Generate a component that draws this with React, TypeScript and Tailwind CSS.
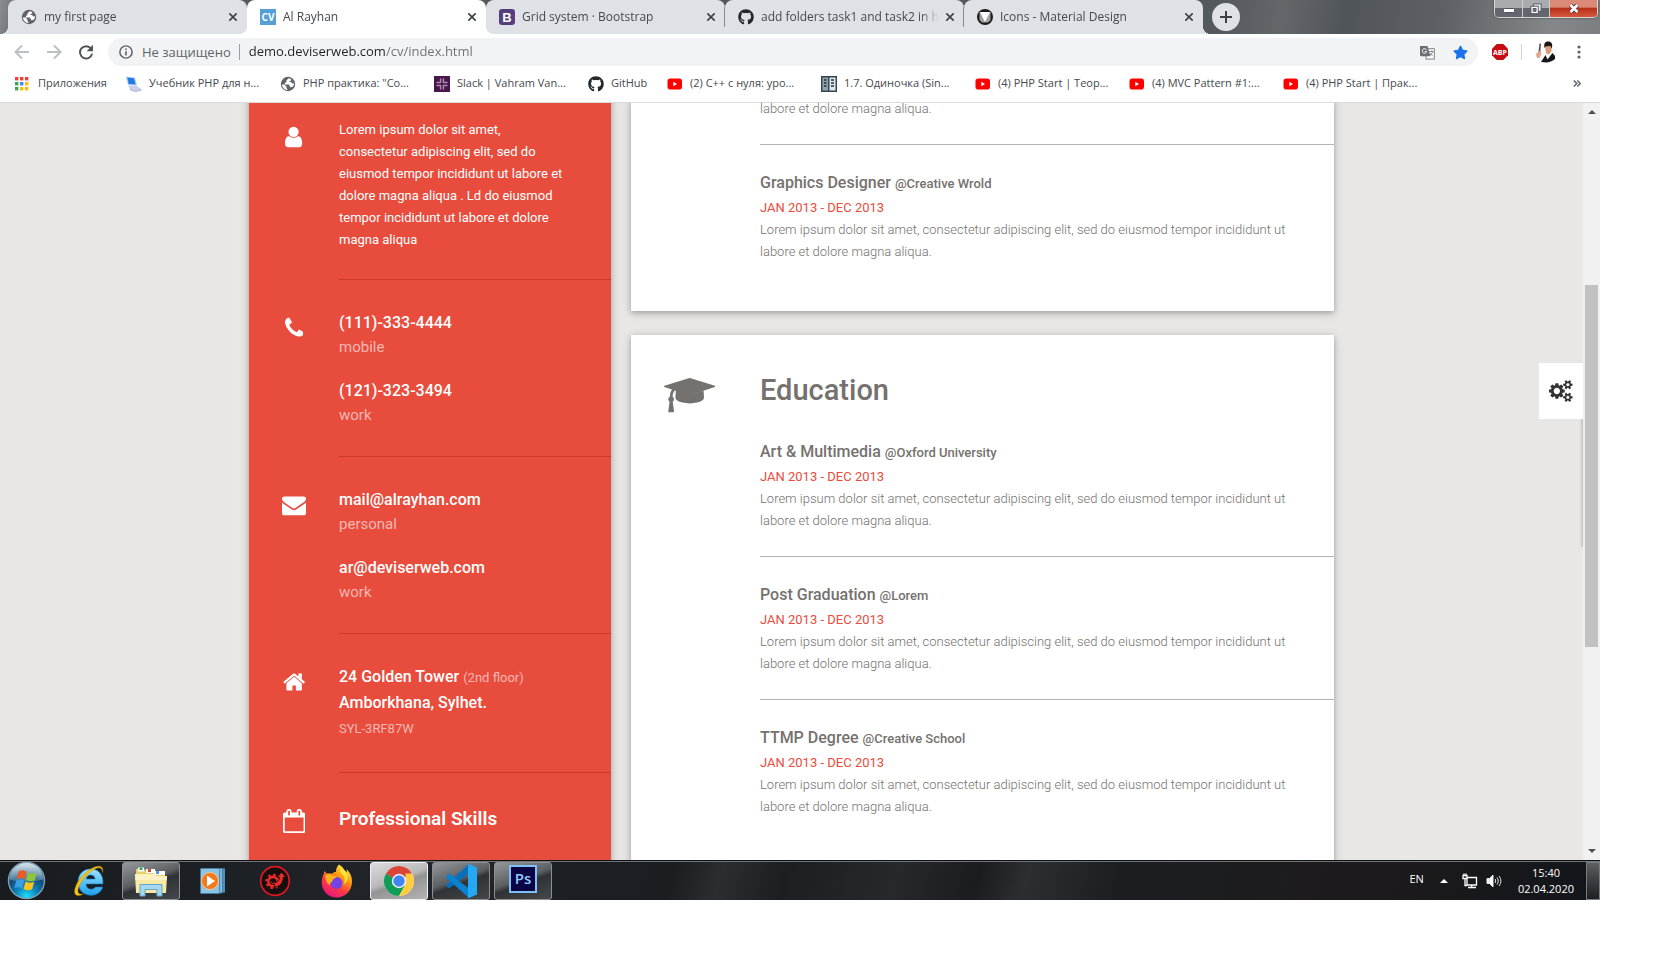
import React from "react";
import { FaGithub, FaStar } from "react-icons/fa";

const LOREM =
  "Lorem ipsum dolor sit amet, consectetur adipiscing elit, sed do eiusmod tempor incididunt ut labore et dolore magna aliqua.";

const PATHS = {
  user: "M1280 137q0 -109 -62.5 -187t-150.5 -78h-854q-88 0 -150.5 78t-62.5 187q0 85 8.5 160.5t31.5 152t58.5 131t94 89t134.5 34.5q131 -128 313 -128t313 128q76 0 134.5 -34.5t94 -89t58.5 -131t31.5 -152t8.5 -160.5zM1024 1024q0 -159 -112.5 -271.5t-271.5 -112.5t-271.5 112.5t-112.5 271.5t112.5 271.5t271.5 112.5t271.5 -112.5t112.5 -271.5z",
  phone:
    "M1408 296q0 -27 -10 -70.5t-21 -68.5q-21 -50 -122 -106q-94 -51 -186 -51q-27 0 -53 3.5t-57.5 12.5t-47 14.5t-55.5 20.5t-49 18q-98 35 -175 83q-127 79 -264 216t-216 264q-48 77 -83 175q-3 9 -18 49t-20.5 55.5t-14.5 47t-12.5 57.5t-3.5 53q0 92 51 186q56 101 106 122q25 11 68.5 21t70.5 10q14 0 21 -3q18 -6 53 -76q11 -19 30 -54t35 -63.5t31 -53.5q3 -4 17.5 -25t21.5 -35.5t7 -28.5q0 -20 -28.5 -50t-62 -55t-62 -53t-28.5 -46q0 -9 5 -22.5t8.5 -20.5t14 -24t11.5 -19q76 -137 174 -235t235 -174q2 -1 19 -11.5t24 -14t20.5 -8.5t22.5 -5q18 0 46 28.5t53 62t55 62t50 28.5q14 0 28.5 -7t35.5 -21.5t25 -17.5q25 -15 53.5 -31t63.5 -35t54 -30q70 -35 76 -53q3 -7 3 -21z",
  mail: "M1792 826v-794q0 -66 -47 -113t-113 -47h-1472q-66 0 -113 47t-47 113v794q44 -49 101 -87q362 -246 497 -345q57 -42 92.5 -65.5t94.5 -48t110 -24.5h1h1q51 0 110 24.5t94.5 48t92.5 65.5q170 123 498 345q57 39 100 87zM1792 1120q0 -79 -49 -151t-122 -123q-376 -261 -468 -325q-10 -7 -42.5 -30.5t-54 -38t-52 -32.5t-57.5 -27t-50 -9h-1h-1q-23 0 -50 9t-57.5 27t-52 32.5t-54 38t-42.5 30.5q-91 64 -262 182.5t-205 142.5q-62 42 -117 115.5t-55 136.5q0 78 41.5 130t118.5 52h1472q65 0 112.5 -47t47.5 -113z",
  home: "M1408 544v-480q0 -26 -19 -45t-45 -19h-384v384h-256v-384h-384q-26 0 -45 19t-19 45v480q0 1 .5 3t.5 3l575 474l575 -474q1 -2 1 -6zM1631 613l-62 -74q-8 -9 -21 -11h-3q-13 0 -21 7l-692 577l-692 -577q-12 -8 -24 -7q-13 2 -21 11l-62 74q-8 10 -7 23.5t11 21.5l719 599q32 26 76 26t76 -26l244 -204v195q0 14 9 23t23 9h192q14 0 23 -9t9 -23v-408l219 -182q10 -8 11 -21.5t-7 -23.5z",
  calendar:
    "M128 -128h1408v1024h-1408v-1024zM512 1088v288q0 14 -9 23t-23 9h-64q-14 0 -23 -9t-9 -23v-288q0 -14 9 -23t23 -9h64q14 0 23 9t9 23zM1280 1088v288q0 14 -9 23t-23 9h-64q-14 0 -23 -9t-9 -23v-288q0 -14 9 -23t23 -9h64q14 0 23 9t9 23zM1664 1152v-1280q0 -52 -38 -90t-90 -38h-1408q-52 0 -90 38t-38 90v1280q0 52 38 90t90 38h128v96q0 66 47 113t113 47h64q66 0 113 -47t47 -113v-96h384v96q0 66 47 113t113 47h64q66 0 113 -47t47 -113v-96h128q52 0 90 -38t38 -90z",
  cap: "M1774 836l18 -316q4 -69 -82 -128t-235 -93.5t-323 -34.5t-323 34.5t-235 93.5t-82 128l18 316l574 -181q22 -7 48 -7t48 7zM2304 1024q0 -23 -22 -31l-1120 -352q-4 -1 -10 -1t-10 1l-652 206q-43 -34 -71 -111.5t-34 -178.5q63 -36 63 -109q0 -69 -58 -107l58 -433q2 -14 -8 -25q-9 -11 -24 -11h-192q-15 0 -24 11q-10 11 -8 25l58 433q-58 38 -58 107q0 73 65 111q11 207 98 330l-333 104q-22 8 -22 31t22 31l1120 352q4 1 10 1t10 -1l1120 -352q22 -8 22 -31z",
  cogs: "M896 640q0 106 -75 181t-181 75t-181 -75t-75 -181t75 -181t181 -75t181 75t75 181zM1664 128q0 52 -38 90t-90 38t-90 -38t-38 -90q0 -53 37.5 -90.5t90.5 -37.5t90.5 37.5t37.5 90.5zM1664 1152q0 52 -38 90t-90 38t-90 -38t-38 -90q0 -53 37.5 -90.5t90.5 -37.5t90.5 37.5t37.5 90.5zM1280 731v-185q0 -10 -7 -19.5t-16 -10.5l-155 -24q-11 -35 -32 -76q34 -48 90 -115q7 -11 7 -20q0 -12 -7 -19q-23 -30 -82.5 -89.5t-78.5 -59.5q-11 0 -21 7l-115 90q-37 -19 -77 -31q-11 -108 -23 -155q-7 -24 -30 -24h-186q-11 0 -20 7.5t-10 17.5l-23 153q-34 10 -75 31l-118 -89q-7 -7 -20 -7q-11 0 -21 8q-144 133 -144 160q0 9 7 19q10 14 41 53t47 61q-23 44 -35 82l-152 24q-10 1 -17 9.5t-7 19.5v185q0 10 7 19.5t16 10.5l155 24q11 35 32 76q-34 48 -90 115q-7 11 -7 20q0 12 7 20q22 30 82 89t79 59q11 0 21 -7l115 -90q34 18 77 32q11 108 23 154q7 24 30 24h186q11 0 20 -7.5t10 -17.5l23 -153q34 -10 75 -31l118 89q8 7 20 7q11 0 21 -8q144 -133 144 -160q0 -8 -7 -19q-12 -16 -42 -54t-45 -60q23 -48 34 -82l152 -23q10 -2 17 -10.5t7 -19.5zM1920 198v-140q0 -16 -149 -31q-12 -27 -30 -52q51 -113 51 -138q0 -4 -4 -7q-122 -71 -124 -71q-8 0 -46 47t-52 68q-20 -2 -30 -2t-30 2q-14 -21 -52 -68t-46 -47q-2 0 -124 71q-4 3 -4 7q0 25 51 138q-18 25 -30 52q-149 15 -149 31v140q0 16 149 31q13 29 30 52q-51 113 -51 138q0 4 4 7q4 2 35 20t59 34t30 16q8 0 46 -46.5t52 -67.5q20 2 30 2t30 -2q51 71 92 112l6 2q4 0 124 -70q4 -3 4 -7q0 -25 -51 -138q17 -23 30 -52q149 -15 149 -31zM1920 1222v-140q0 -16 -149 -31q-12 -27 -30 -52q51 -113 51 -138q0 -4 -4 -7q-122 -71 -124 -71q-8 0 -46 47t-52 68q-20 -2 -30 -2t-30 2q-14 -21 -52 -68t-46 -47q-2 0 -124 71q-4 3 -4 7q0 25 51 138q-18 25 -30 52q-149 15 -149 31v140q0 16 149 31q13 29 30 52q-51 113 -51 138q0 4 4 7q4 2 35 20t59 34t30 16q8 0 46 -46.5t52 -67.5q20 2 30 2t30 -2q51 71 92 112l6 2q4 0 124 -70q4 -3 4 -7q0 -25 -51 -138q17 -23 30 -52q149 -15 149 -31z",
};

const ADVANCE = { user: 1280, phone: 1408, mail: 1792, home: 1664, calendar: 1664, cap: 2304, cogs: 1920 };

type GlyphName = keyof typeof PATHS;

function Glyph({ name, className }: { name: GlyphName; className: string }) {
  return (
    <svg viewBox={`0 -1536 ${ADVANCE[name]} 1792`} className={className} fill="currentColor" aria-hidden="true">
      <path transform="scale(1 -1)" d={PATHS[name]} />
    </svg>
  );
}

/* ---------- favicons ---------- */

function GlobeIcon() {
  return (
    <svg viewBox="0 0 16 16" className="size-4 shrink-0">
      <circle cx="8" cy="8" r="7.2" fill="#5f6368" />
      <path d="M8.6 2.2 6.4 4.6v1.5l-1.6.9v1.4h3.8l1.3 1.5v1.3l2.4-.2c1.2-1 1.9-2.4 1.7-3.8l-1.5.3-1.5-1.4H9.6V4.8h1.6V3.2C10.4 2.6 9.6 2.3 8.6 2.2z" fill="#fff" />
      <path d="M1.9 8.6h2.6l1.9 1.9v1.6l1 .9v1.1C4.5 13.9 2.2 11.6 1.9 8.6z" fill="#fff" />
    </svg>
  );
}

function CvIcon() {
  return (
    <span className="flex size-4 shrink-0 items-center justify-center bg-[#55a0d8] text-[10px] leading-none font-bold text-white">CV</span>
  );
}

function BootstrapIcon() {
  return (
    <span className="flex size-4 shrink-0 items-center justify-center rounded-[3px] bg-[#563d7c] font-['Liberation_Sans',sans-serif] text-[13px] leading-none font-bold text-white">
      B
    </span>
  );
}

function MaterialIcon() {
  return (
    <svg viewBox="0 0 16 16" className="size-4 shrink-0">
      <circle cx="8" cy="8" r="8" fill="#1b1b1b" />
      <path d="M2.500 3h11v8L11 13.500H5L2.500 11z" fill="#a3a3a3" />
      <path d="M3 3h10L8 13z" fill="#fff" />
    </svg>
  );
}

function YoutubeIcon() {
  return (
    <svg viewBox="0 0 16 16" className="size-4 shrink-0">
      <rect x="0.5" y="2.5" width="14.5" height="11" rx="2.8" fill="#f00" />
      <path d="M6.3 5.8v4.4L10 8z" fill="#fff" />
    </svg>
  );
}

function AppsIcon() {
  const colors = ["#ea4335", "#ea4335", "#ea4335", "#34a853", "#4285f4", "#fbbc05", "#34a853", "#fbbc05", "#fbbc05"];
  return (
    <svg viewBox="0 0 16 16" className="size-4 shrink-0">
      {colors.map((c, i) => (
        <rect key={i} x={(i % 3) * 5} y={1 + Math.floor(i / 3) * 5} width="3.4" height="3.4" fill={c} />
      ))}
    </svg>
  );
}

function ComputerIcon() {
  return (
    <svg viewBox="0 0 16 16" className="size-4 shrink-0">
      <path d="M0 .5 9 1.5l2 8L2 9z" fill="#b9cdf2" />
      <path d="M1.2 1.6 8 2.3l1.6 6.2L2.700 8z" fill="#1d7fe4" />
      <path d="M2 9.500 10.500 9.800l5 3.500-6 2.200L4 13z" fill="#c9cfe8" />
      <path d="M4 13l5.500 2.500 6-2.200v.9L9.500 16 4 14z" fill="#8f96c4" />
    </svg>
  );
}

function SlackIcon() {
  return (
    <svg viewBox="0 0 16 16" className="size-4 shrink-0">
      <rect width="16" height="16" fill="#4a154b" />
      <g stroke="#a98cab" strokeWidth="1.5" strokeLinecap="round">
        <path d="M6.6 3v3.600M9.400 3v3.300M6.600 9.600v3.400M9.400 9.400V13M3 6.600h3.400M9.600 6.600H13M3 9.400h3.400M9.600 9.400H13" />
      </g>
    </svg>
  );
}

function PatternIcon() {
  return (
    <svg viewBox="0 0 16 16" className="size-4 shrink-0">
      <rect width="16" height="16" fill="#37474f" />
      <rect x="1.5" y="1.5" width="5.5" height="13" fill="#8fa3ae" />
      <rect x="8.5" y="1.5" width="6" height="13" fill="#dfe6ea" />
      <path d="M3 4h2.500M3 7h2.500M3 10h2.500M10 4h3M10 7h3M10 10h3" stroke="#263238" strokeWidth="1.3" />
    </svg>
  );
}

/* ---------- browser window ---------- */

type TabInfo = { title: string; icon: React.ReactNode; active?: boolean; divider?: boolean; edge?: "first" | "last" };

const TABS: TabInfo[] = [
  { title: "my first page", icon: <GlobeIcon />, edge: "first" },
  { title: "Al Rayhan", icon: <CvIcon />, active: true },
  { title: "Grid system · Bootstrap", icon: <BootstrapIcon />, divider: true },
  { title: "add folders task1 and task2 in html", icon: <FaGithub className="size-4 shrink-0 text-[#24292e]" />, divider: true },
  { title: "Icons - Material Design", icon: <MaterialIcon />, edge: "last" },
];

function Tab({ title, icon, active, divider, edge }: TabInfo) {
  return (
    <div
      className={
        "relative flex h-full w-[239px] items-center gap-[7px] rounded-t-lg pr-[10px] pl-[13px] " +
        (active
          ? "z-10 bg-white before:absolute before:bottom-0 before:-left-2 before:size-2 before:bg-[radial-gradient(circle_at_0_0,transparent_8px,#fff_8px)] after:absolute after:-right-2 after:bottom-0 after:size-2 after:bg-[radial-gradient(circle_at_100%_0,transparent_8px,#fff_8px)]"
          : "bg-[#dee1e6] ") +
        (edge === "first"
          ? "before:absolute before:bottom-0 before:-left-2 before:size-2 before:bg-[radial-gradient(circle_at_0_0,transparent_8px,#dee1e6_8px)]"
          : "") +
        (edge === "last"
          ? "after:absolute after:-right-2 after:bottom-0 after:size-2 after:bg-[radial-gradient(circle_at_100%_0,transparent_8px,#dee1e6_8px)]"
          : "")
      }
    >
      {icon}
      <span className="flex-1 overflow-hidden [mask-image:linear-gradient(to_right,#000_90%,transparent)] text-[12px] whitespace-nowrap text-[#45494d]">
        {title}
      </span>
      <button aria-label={`Close ${title}`} className="flex size-2 items-center justify-center">
        <svg viewBox="0 0 8 8" className="size-2" stroke="#3c4043" strokeWidth="1.6">
          <path d="M.3.3l7.4 7.4M7.7.3.3 7.7" />
        </svg>
      </button>
      {divider && <span className="absolute top-[7px] right-0 h-5 w-px bg-[#85888c]" />}
    </div>
  );
}

function WindowControls() {
  return (
    <div className="mr-[2px] flex h-[18px] overflow-hidden rounded-b-[5px] border border-t-0 border-[#d4d6d8] shadow-[0_0_2px_#333]">
      <button aria-label="Minimize" className="flex w-[28px] items-center justify-center border-r border-[#d0d0d0] bg-linear-to-b from-[#a9abae] from-45% to-[#63676d] to-50%">
        <svg viewBox="0 0 12 6" className="mt-1 h-[6px] w-3">
          <rect x=".5" y=".5" width="11" height="4" rx="1" fill="#fff" stroke="#50525f" />
        </svg>
      </button>
      <button aria-label="Restore" className="flex w-[27px] items-center justify-center border-r border-[#d0d0d0] bg-linear-to-b from-[#a9abae] from-45% to-[#63676d] to-50%">
        <svg viewBox="0 0 13 13" className="size-3 fill-none">
          <rect x="4" y="1" width="8" height="8" fill="#eee" stroke="#50525f" />
          <rect x="1" y="3.5" width="8" height="8" fill="#fff" stroke="#50525f" />
          <rect x="3.5" y="6" width="3" height="3" fill="#777" stroke="#50525f" />
        </svg>
      </button>
      <button aria-label="Close window" className="flex w-[47px] items-center justify-center bg-linear-to-b from-[#dc8a78] from-40% via-[#b9311a] via-50% to-[#d4583a]">
        <svg viewBox="0 0 12 11" className="h-[11px] w-3">
          <path d="M2.500 2l7 7M9.500 2l-7 7" stroke="#50303a" strokeWidth="4.2" />
          <path d="M2.500 2l7 7M9.500 2l-7 7" stroke="#fff" strokeWidth="2.6" />
        </svg>
      </button>
    </div>
  );
}

function TabStrip() {
  return (
    <div className="flex h-[34px] shrink-0 bg-[linear-gradient(100deg,#8b8f92_0%,#54585c_2%,#54595d_76%,#63676a_80%,#50555a_84%,#5d6165_90%,#85888a_97%,#7b7e80_100%)] pl-2">
      {TABS.map((t) => (
        <Tab key={t.title} {...t} />
      ))}
      <button aria-label="New tab" className="mt-[3px] ml-[9px] flex size-7 items-center justify-center rounded-full bg-[#dee1e6]">
        <svg viewBox="0 0 12 12" className="size-3" stroke="#3c4043" strokeWidth="2">
          <path d="M6 0v12M0 6h12" />
        </svg>
      </button>
      <div className="flex-1" />
      <WindowControls />
    </div>
  );
}

function Toolbar() {
  return (
    <div className="flex h-9 shrink-0 items-center bg-white pr-[13px] pl-[14px]">
      <button aria-label="Back" className="mr-4 size-4">
        <svg viewBox="0 0 16 16" className="size-4 fill-none" stroke="#bdbfc1" strokeWidth="2">
          <path d="M15 8H2M8 1.500 1.500 8 8 14.500" />
        </svg>
      </button>
      <button aria-label="Forward" className="mr-4 size-4">
        <svg viewBox="0 0 16 16" className="size-4 fill-none" stroke="#bdbfc1" strokeWidth="2">
          <path d="M1 8h13M8 1.500 14.500 8 8 14.500" />
        </svg>
      </button>
      <button aria-label="Reload" className="mr-[14px] size-4">
        <svg viewBox="0 0 16 16" className="size-4 fill-none">
          <path d="M13 4.600A6.100 6.100 0 1 0 14.100 9.600" stroke="#505458" strokeWidth="2" />
          <path d="M15 .8v6.400H8.600z" fill="#505458" />
        </svg>
      </button>
      <div className="flex h-7 flex-1 items-center rounded-full bg-[#f1f3f4] pr-[10px] pl-[11px]">
        <svg viewBox="0 0 16 16" className="mr-[9px] size-[14px] fill-none" stroke="#5f6368">
          <circle cx="8" cy="8" r="7" strokeWidth="1.7" />
          <path d="M8 7v5M8 4v1.800" strokeWidth="1.8" />
        </svg>
        <label htmlFor="address" className="border-r border-[#9aa0a6] pr-2 text-[13px] leading-4 text-[#5f6368]">
          Не защищено
        </label>
        <input
          id="address"
          defaultValue="demo.deviserweb.com/cv/index.html"
          className="ml-[9px] flex-1 bg-[linear-gradient(to_right,#202124_137px,#6b6f74_137px)] bg-clip-text text-[13px] text-transparent outline-none"
        />
        <button aria-label="Translate" className="mr-[18px]">
          <svg viewBox="0 0 16 16" className="size-[15px]">
            <rect x="6.5" y="4" width="8.800" height="11" fill="#fff" stroke="#777b80" />
            <path d="M0 1h8l3 11H1a1 1 0 0 1-1-1z" fill="#6b6f74" />
            <path d="M7 5.200A2.400 2.400 0 1 0 7.200 7H5" stroke="#fff" fill="none" />
            <path d="M9.500 7h5M12 6v1M13.500 7c-.5 2-1.500 3-3 4M10.500 8.500c.8 1.500 1.800 2.300 3 3" stroke="#777b80" fill="none" />
          </svg>
        </button>
        <button aria-label="Bookmark this page">
          <FaStar className="size-[15px] text-[#1a73e8]" />
        </button>
      </div>
      <button aria-label="Ad blocker" className="ml-[14px]">
        <svg viewBox="0 0 16 16" className="size-4">
          <path d="M4.700 0h6.600L16 4.700v6.600L11.300 16H4.700L0 11.300V4.700z" fill="#c70d12" />
          <text x="8" y="10.7" textAnchor="middle" fontFamily="Open Sans, sans-serif" fontSize="7" fontWeight="700" fill="#fff">
            ABP
          </text>
        </svg>
      </button>
      <span className="mx-[13px] h-4 w-px bg-[#cfd1d4]" />
      <button aria-label="Profile" className="mr-[14px]">
        <svg viewBox="0 0 22 22" className="size-[22px]">
          <circle cx="11" cy="11" r="11" fill="#fbfaf9" />
          <path d="M6 21l4.500-7 3 3 4-5 2.500 3v3c-2 2-5 3-8 3.500z" fill="#15161a" />
          <path d="M10.500 14l4-1.500.5 2-2.500 4z" fill="#fff" />
          <path d="M10 4.500h6.500L16.500 10 14 13.500 11 12z" fill="#d99a77" />
          <path d="M9.500 7C8.500 2.500 10.500.5 13 .6c3.500 0 5 2.400 3.800 7.200L15.500 5l-4.500.3z" fill="#1c1512" />
          <path d="M4.500 2.500h1.400l-.6 8-1.800 1z" fill="#44474e" />
          <path d="M1 13l3-3 2.500 1-1.500 5.500-3 .5z" fill="#e0a585" />
        </svg>
      </button>
      <button aria-label="Menu" className="flex w-4 justify-center">
        <svg viewBox="0 0 4 14" className="h-[14px] w-1" fill="#5f6368">
          <circle cx="2" cy="2" r="1.6" />
          <circle cx="2" cy="7" r="1.6" />
          <circle cx="2" cy="12" r="1.6" />
        </svg>
      </button>
    </div>
  );
}

const BOOKMARKS = [
  { text: "Приложения", icon: <AppsIcon />, width: "w-[111px]" },
  { text: "Учебник PHP для н...", icon: <ComputerIcon />, width: "w-[154px]" },
  { text: 'PHP практика: "Со...', icon: <GlobeIcon />, width: "w-[154px]" },
  { text: "Slack | Vahram Van...", icon: <SlackIcon />, width: "w-[154px]" },
  { text: "GitHub", icon: <FaGithub className="size-4 shrink-0 text-[#24292e]" />, width: "w-[79px]" },
  { text: "(2) С++ с нуля: уро...", icon: <YoutubeIcon />, width: "w-[154px]" },
  { text: "1.7. Одиночка (Sin...", icon: <PatternIcon />, width: "w-[154px]" },
  { text: "(4) PHP Start | Теор...", icon: <YoutubeIcon />, width: "w-[154px]" },
  { text: "(4) MVC Pattern #1:...", icon: <YoutubeIcon />, width: "w-[154px]" },
  { text: "(4) PHP Start | Прак...", icon: <YoutubeIcon />, width: "w-[154px]" },
];

function BookmarksBar() {
  return (
    <nav aria-label="Bookmarks" className="flex h-[33px] shrink-0 items-center border-b border-[#d9dadc] bg-white pr-[19px] pb-[5px] pl-[15px] text-[11px] text-[#45494d]">
      {BOOKMARKS.map((b) => (
        <a key={b.text} href="#" className={"flex shrink-0 items-center gap-[7px] whitespace-nowrap " + b.width}>
          {b.icon}
          {b.text}
        </a>
      ))}
      <button aria-label="More bookmarks" className="ml-auto">
        <svg viewBox="0 0 8 7" className="h-[7px] w-2 fill-none" stroke="#5f6368" strokeWidth="1.5">
          <path d="M.8.5l3 3-3 3M4.300.5l3 3-3 3" />
        </svg>
      </button>
    </nav>
  );
}

/* ---------- CV page ---------- */

function SideRow({ icon, children, last }: { icon: GlyphName; children: React.ReactNode; last?: boolean }) {
  return (
    <section className="flex">
      <div className="flex w-[90px] shrink-0 justify-center pt-9">
        <Glyph name={icon} className="h-6" />
      </div>
      <div className={"flex-1 pt-[30px] " + (last ? "" : "border-b border-[#cc3a2c]")}>{children}</div>
    </section>
  );
}

function Contact({ value, kind }: { value: string; kind: string }) {
  return (
    <div className="text-[16px] leading-[25px]">
      <div className="font-medium">{value}</div>
      <div className="text-[15px] text-white/60">{kind}</div>
    </div>
  );
}

function Sidebar() {
  return (
    <aside className="-mt-[14px] w-[362px] shrink-0 bg-[#e84c3d] text-white shadow-[0_2px_5px_rgba(0,0,0,0.2),0_2px_10px_rgba(0,0,0,0.16)]">
      <SideRow icon="user">
        <p className="pr-[44px] pb-7 text-[13px] leading-[22px]">
          Lorem ipsum dolor sit amet, consectetur adipiscing elit, sed do eiusmod tempor incididunt ut labore et dolore magna
          aliqua . Ld do eiusmod tempor incididunt ut labore et dolore magna aliqua
        </p>
      </SideRow>
      <SideRow icon="phone">
        <div className="flex flex-col gap-[18px] pb-7">
          <Contact value="(111)-333-4444" kind="mobile" />
          <Contact value="(121)-323-3494" kind="work" />
        </div>
      </SideRow>
      <SideRow icon="mail">
        <div className="flex flex-col gap-[18px] pb-7">
          <Contact value="mail@alrayhan.com" kind="personal" />
          <Contact value="ar@deviserweb.com" kind="work" />
        </div>
      </SideRow>
      <SideRow icon="home">
        <address className="pb-[30px] text-[16px] leading-[26px] font-medium not-italic">
          24 Golden Tower <span className="text-[13px] leading-none font-normal text-white/60">(2nd floor)</span>
          <br />
          Amborkhana, Sylhet.
          <br />
          <span className="block text-[13px] font-normal text-white/60">SYL-3RF87W</span>
        </address>
      </SideRow>
      <SideRow icon="calendar" last>
        <h2 className="text-[19px] leading-8 font-semibold">Professional Skills</h2>
      </SideRow>
    </aside>
  );
}

function Entry({ title, place, last }: { title: string; place: string; last?: boolean }) {
  return (
    <article className={"py-6 " + (last ? "" : "border-b border-[#b5b5b5]")}>
      <h3 className="text-[16px] leading-7 font-medium text-[#75716e]">
        {title} <span className="text-[13px] leading-none">@{place}</span>
      </h3>
      <div className="text-[13px] leading-[22px] text-[#e84c3d]">JAN 2013 - DEC 2013</div>
      <p className="pr-[30px] text-[13px] leading-[22px] font-light">{LOREM}</p>
    </article>
  );
}

function CvPage() {
  return (
    <div className="relative flex min-h-0 flex-1 overflow-hidden bg-[#e8e7e5] font-['Roboto',sans-serif]">
      <main className="min-w-0 flex-1">
        <div className="mx-auto flex w-[1085px] max-w-full gap-5">
          <Sidebar />
          <div className="-mt-[5px] flex min-w-0 flex-1 flex-col gap-6 text-[#75716e]">
            <section className="bg-white pb-6 pl-[129px] shadow-[0_2px_5px_rgba(0,0,0,0.2),0_2px_10px_rgba(0,0,0,0.16)]">
              <p className="border-b border-[#b5b5b5] pr-[30px] pb-6 text-[13px] leading-[22px] font-light">
                labore et dolore magna aliqua.
              </p>
              <Entry title="Graphics Designer" place="Creative Wrold" last />
            </section>
            <section className="flex bg-white pb-10 shadow-[0_2px_5px_rgba(0,0,0,0.2),0_2px_10px_rgba(0,0,0,0.16)]">
              <div className="w-[129px] shrink-0 pt-10 pl-[33px]">
                <Glyph name="cap" className="h-10" />
              </div>
              <div className="flex-1 pt-[31px]">
                <h2 className="text-[29px] leading-[48px] font-medium">Education</h2>
                <Entry title="Art & Multimedia" place="Oxford University" />
                <Entry title="Post Graduation" place="Lorem" />
                <Entry title="TTMP Degree" place="Creative School" last />
              </div>
            </section>
          </div>
        </div>
      </main>
      <span className="absolute top-[260px] right-[17px] h-[184px] w-px bg-[#c6c5c3] shadow-[-1px_0_2px_#bbb]" />
      <button aria-label="Theme settings" className="absolute top-[260px] right-[17px] flex h-14 w-11 items-center justify-center bg-white text-[#333]">
        <Glyph name="cogs" className="h-[22px]" />
      </button>
      <div className="flex w-[17px] shrink-0 flex-col items-center bg-[#f1f1f1] py-[7px]">
        <svg viewBox="0 0 8 4" className="h-1 w-2" fill="#505050">
          <path d="M0 4l4-4 4 4z" />
        </svg>
        <div className="min-h-0 w-[13px] flex-1 pt-[171px]">
          <div className="h-[362px] bg-[#c1c1c1]" />
        </div>
        <svg viewBox="0 0 8 4" className="h-1 w-2" fill="#505050">
          <path d="M0 0l4 4 4-4z" />
        </svg>
      </div>
    </div>
  );
}

/* ---------- taskbar ---------- */

function StartOrb() {
  return (
    <svg viewBox="0 0 40 40" className="size-[39px]">
      <defs>
        <radialGradient id="orb" cx="50%" cy="95%" r="85%">
          <stop offset="0" stopColor="#1fe0ff" />
          <stop offset=".35" stopColor="#0c86bd" />
          <stop offset=".7" stopColor="#154a77" />
          <stop offset="1" stopColor="#6f93ad" />
        </radialGradient>
        <linearGradient id="orbGloss" x1="0" y1="0" x2="0" y2="1">
          <stop offset="0" stopColor="#e8f2f8" stopOpacity=".85" />
          <stop offset="1" stopColor="#8fb4cc" stopOpacity=".35" />
        </linearGradient>
      </defs>
      <circle cx="20" cy="20" r="18.5" fill="url(#orb)" stroke="#7f9db3" strokeWidth="1.4" />
      <path d="M3 19a17 17 0 0 1 34 0c-8 2.500-26 3-34 0z" fill="url(#orbGloss)" />
      <path d="M12 10.500c3-1.600 5.500-1.200 8 .4l-2 8c-2.500-1.600-5-1.800-8-.4z" fill="#ef5a24" />
      <path d="M21.500 11.700c3 1.600 5.500 1.800 9 .2l-2.200 8c-3 1.500-5.500 1.200-8.800-.4z" fill="#8cc63e" />
      <path d="M9.500 20c3-1.400 5.500-1.200 8 .4l-2 7.800c-2.500-1.600-5-1.800-8-.4z" fill="#3aa0e6" />
      <path d="M19 21c3 1.600 5.500 1.800 8.900.3l-2.100 7.800c-3 1.500-5.700 1.300-8.900-.3z" fill="#fcc51c" />
    </svg>
  );
}

function IeIcon() {
  return (
    <svg viewBox="0 0 32 34" className="h-[34px] w-8">
      <defs>
        <linearGradient id="ie" x1="0" y1="0" x2="0" y2="1">
          <stop offset="0" stopColor="#9ce4ff" />
          <stop offset="1" stopColor="#1e9fe8" />
        </linearGradient>
      </defs>
      <path d="M17.500 5C10 5 5 10.500 5 18s5.200 13.300 13 13.300c5.700 0 10-3 11.700-8.300h-7.400c-.8 1.400-2.200 2.200-4.200 2.200-3 0-4.900-1.900-5-5.200H30C30.500 11 26 5 17.500 5zm-4.300 10c.4-2.500 2-4 4.500-4s4.200 1.500 4.400 4z" fill="url(#ie)" stroke="#1279bd" strokeWidth=".6" />
      <path d="M29.500 8.500C31 3 27.500.5 20.500 3.500 12 7.500 4 17 2 24.500c-1.600 6.500 1.700 9 8.500 5.500-5 1-6.800-1.500-4.700-7C8.300 16.500 14.500 9 21.500 5.200c4.800-2.500 7.800-1.800 8 3.300z" fill="#f7c412" stroke="#a97f05" strokeWidth=".4" />
    </svg>
  );
}

function ExplorerIcon() {
  return (
    <svg viewBox="0 0 32 32" className="size-8">
      <path d="M1 4h8l2 2h19v20H1z" fill="#e9cf6c" />
      <path d="M3 2.500h6v4H3z" fill="#fff" />
      <path d="M4.500 2.500h3V5h-3z" fill="#32a852" />
      <path d="M11 4h9v4h-9z" fill="#fff" />
      <path d="M13 4h3v3h-3z" fill="#cf4a35" />
      <path d="M19 6h11v4H19z" fill="#fff" />
      <path d="M21 6h3v3h-3z" fill="#4a94db" />
      <path d="M0 9h19l2 2h11l-1 17H1z" fill="#f8e9a5" />
      <path d="M0 9h19l2 2h11l-.300 4H.3z" fill="#fbf2c4" />
      <path d="M5 31V19.500h22V31h-5v-6.500H10V31z" fill="#a5d8ee" stroke="#5ea8cb" />
    </svg>
  );
}

function MediaPlayerIcon() {
  return (
    <svg viewBox="0 0 28 28" className="size-7">
      <path d="M8 1.500h18v24H8z" fill="#4f8fbb" />
      <path d="M5 1.500h18.500v24.500H5z" fill="#7cb6d9" stroke="#3c77a1" strokeWidth=".7" />
      <path d="M1.500 1.500h19v25h-19z" fill="#8cc4e4" stroke="#3c77a1" strokeWidth=".7" />
      <circle cx="11" cy="14" r="8.5" fill="#f17a1d" stroke="#fbc696" />
      <path d="M8 8.500v11l8-5.500z" fill="#fff" />
    </svg>
  );
}

function BoosterIcon() {
  return (
    <svg viewBox="0 0 32 32" className="size-8">
      <circle cx="16" cy="16" r="14.3" fill="#15100f" stroke="#e0191f" strokeWidth="1.7" />
      <circle cx="14" cy="16.5" r="4.6" fill="none" stroke="#ee2a24" strokeWidth="2.6" />
      <circle cx="14" cy="16.5" r="6.7" fill="none" stroke="#ee2a24" strokeWidth="2" strokeDasharray="2.6 2.66" />
      <path d="M15 18c3-.5 5-2.500 5.500-5.500h-2.300L22.500 7l4.300 5.500h-2.500c0 5.500-3.500 9-8.500 9.800z" fill="#ee2a24" stroke="#15100f" strokeWidth="1" />
      <path d="M12 16.500a2.200 2.200 0 0 0 4 1" fill="none" stroke="#ee2a24" strokeWidth="1" />
    </svg>
  );
}

function FirefoxIcon() {
  return (
    <svg viewBox="0 0 32 34" className="h-[34px] w-8">
      <defs>
        <linearGradient id="ff" x1=".8" y1="0" x2=".2" y2="1">
          <stop offset="0" stopColor="#fff44f" />
          <stop offset=".35" stopColor="#ff980e" />
          <stop offset=".65" stopColor="#ff3647" />
          <stop offset="1" stopColor="#e31587" />
        </linearGradient>
      </defs>
      <path d="M18 .5c5 3 5.500 6.500 8 9-.2-2 0-3-.6-4.500 4 3.500 5.900 8.500 5.600 13.500-.5 8.500-7 15-15.200 15S1 27.500.7 19c-.1-4 .8-7 2.300-9.500V7l3 2.500c2-.5 3-.4 4.500.3C12 8.500 13.500 8 15 8c0-3 .8-5.500 3-7.500z" fill="url(#ff)" />
      <circle cx="15.5" cy="19" r="6" fill="#7542e5" />
      <path d="M4.500 11c3-1.500 5-1 6.500.5l5 .5c-.5 2-4 2.500-4.500 4.500 0 2-3.500 2-3 5-3-2.500-4.500-6-4-10.500z" fill="#ffb21c" />
      <path d="M19 8c5 3.500 6 9 3 13 5-3 5.500-8 3.500-13L19 3z" fill="#ffe13a" />
    </svg>
  );
}

function ChromeIcon() {
  return (
    <svg viewBox="0 0 32 32" className="size-8">
      <circle cx="16" cy="16" r="15" fill="#fff" />
      <path d="M16 16 3 8.500A15 15 0 0 1 29 8.500z" fill="#db4437" />
      <path d="M3 8.500A15 15 0 0 0 16 31l6.500-11.500L16 16z" fill="#0f9d58" />
      <path d="M29 8.500A15 15 0 0 1 16 31l6.500-11.500V8.500z" fill="#ffcd40" />
      <path d="M3 8.500h26H16v8z" fill="#db4437" />
      <circle cx="16" cy="16" r="7.2" fill="#f1f1f1" />
      <circle cx="16" cy="16" r="5.7" fill="#4285f4" />
    </svg>
  );
}

function CodeIcon() {
  return (
    <svg viewBox="0 0 32 34" className="h-[34px] w-8">
      <path d="M24 0 .500 21l3.500 3.500L24 9.500z" fill="#0a6fb8" />
      <path d="M24 34 .500 13 4 9.500l20 15z" fill="#0b83d0" />
      <path d="M23 .5l1-.5 8 3.500v27L24 34l-1-.5z" fill="#24a9f2" />
    </svg>
  );
}

function PhotoshopIcon() {
  return (
    <span className="mb-1 flex size-7 items-center justify-center border-2 border-[#7fc0fb] bg-[#0c0545] text-[15px] leading-none font-semibold text-[#8fcbff]">
      Ps
    </span>
  );
}

const APPS = [
  { name: "Internet Explorer", icon: <IeIcon />, state: "idle" },
  { name: "File Explorer", icon: <ExplorerIcon />, state: "open" },
  { name: "Media Player", icon: <MediaPlayerIcon />, state: "idle" },
  { name: "Driver Booster", icon: <BoosterIcon />, state: "idle" },
  { name: "Firefox", icon: <FirefoxIcon />, state: "idle" },
  { name: "Chrome", icon: <ChromeIcon />, state: "active" },
  { name: "Code", icon: <CodeIcon />, state: "open" },
  { name: "Photoshop", icon: <PhotoshopIcon />, state: "open" },
];

const APP_STYLE: Record<string, string> = {
  idle: "border-transparent",
  open: "border-[#8d8f91] bg-[linear-gradient(160deg,#95979a_0%,#5c5f62_45%,#303336_55%,#45484a_100%)]",
  active: "border-[#f0f0f0] bg-[linear-gradient(160deg,#dcdcdc_0%,#b9b9b9_45%,#949494_55%,#b4b4b4_100%)]",
};

function Taskbar() {
  return (
    <footer className="flex h-10 shrink-0 items-center border-t border-[#0d0f11] bg-[linear-gradient(105deg,#181c1f_0%,#22262b_30%,#1b1f23_36%,#1b1e21_42%,#2b2e31_45%,#1c1f22_49%,#26292c_56%,#1a1c1f_61%,#2c2f32_64%,#1b1e21_70%,#1d1a1d_85%,#12161a_100%)] text-white shadow-[inset_0_1px_0_#70757a]">
      <button aria-label="Start" className="ml-[7px] w-[53px]">
        <StartOrb />
      </button>
      <div className="flex gap-1">
        {APPS.map((a) => (
          <button key={a.name} aria-label={a.name} className={"flex h-[38px] w-[58px] items-center justify-center rounded-[3px] border " + APP_STYLE[a.state]}>
            {a.icon}
          </button>
        ))}
      </div>
      <div className="ml-auto flex items-center text-[11px] leading-4">
        <span className="mb-1">EN</span>
        <button aria-label="Hidden icons" className="ml-4 w-2">
          <svg viewBox="0 0 8 4" className="h-1 w-2" fill="#fff">
            <path d="M0 4l4-4 4 4z" />
          </svg>
        </button>
        <svg viewBox="0 0 16 16" className="ml-[14px] size-4 fill-none" stroke="#fff" strokeWidth="1.3">
          <path d="M5 4.500h9.500V12H5zM9.700 12v2.500M6 14.500h8M1 2.500h4v3H1zM2 .5v2M4 .5v2M3 5.500v7h2" />
        </svg>
        <svg viewBox="0 0 16 16" className="ml-2 size-4 fill-none" stroke="#e8e8e8">
          <path d="M1 5.500h2v5H1zM3.500 5.500 7 2v12l-3.500-3.500z" fill="#fff" />
          <path d="M9 6c.9 1.300.9 2.700 0 4M11 4.500c1.700 2.300 1.700 4.700 0 7M13 3c2.500 3.300 2.500 6.700 0 10" />
        </svg>
        <time className="ml-4 text-center">
          15:40
          <br />
          02.04.2020
        </time>
        <button aria-label="Show desktop" className="ml-3 h-[38px] w-[14px] border border-[#7a7d80] bg-linear-to-b from-[#5d6063] to-[#1d2023]" />
      </div>
    </footer>
  );
}

export default function App() {
  return (
    <div className="h-screen overflow-hidden bg-white pr-[68px] pb-[60px]">
      <div className="flex h-full flex-col font-['Open_Sans','Noto_Sans',sans-serif]">
        <TabStrip />
        <Toolbar />
        <BookmarksBar />
        <CvPage />
        <Taskbar />
      </div>
    </div>
  );
}
